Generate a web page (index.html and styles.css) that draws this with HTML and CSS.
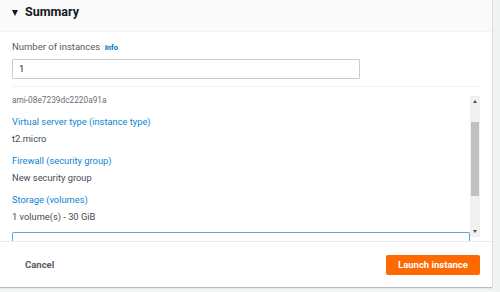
FILE: index.html
```html
<!DOCTYPE html>
<html>
<head>
<meta charset="utf-8">
<link rel="stylesheet" href="styles.css">
</head>
<body>
<div class="panel">
  <div class="header">
    <span class="caret"></span>
    <h2 class="title">Summary</h2>
  </div>
  <div class="top">
    <div class="field-label">Number of instances <a class="info">Info</a></div>
    <div class="input">1</div>
    <div class="sep"></div>
  </div>
  <div class="scroll">
    <div class="scroll-content">
      <div class="ami">ami-08e7239dc2220a91a</div>
      <div class="item">
        <div class="key">Virtual server type (instance type)</div>
        <div class="val">t2.micro</div>
      </div>
      <div class="item">
        <div class="key">Firewall (security group)</div>
        <div class="val">New security group</div>
      </div>
      <div class="item">
        <div class="key">Storage (volumes)</div>
        <div class="val">1 volume(s) - 30 GiB</div>
      </div>
      <div class="box"></div>
    </div>
    <div class="scrollbar">
      <div class="arrow up"></div>
      <div class="track"><div class="thumb"></div></div>
      <div class="arrow down"></div>
    </div>
  </div>
  <div class="footer">
    <span class="cancel">Cancel</span>
    <button class="launch">Launch instance</button>
  </div>
</div>
</body>
</html>
```
FILE: styles.css
```css
html, body {
  margin: 0;
  padding: 0;
}
body {
  width: 500px;
  height: 292px;
  background: #f2f3f3;
  font-family: Roboto, "Open Sans", sans-serif;
  color: #16191f;
  overflow: hidden;
}
.panel {
  width: 492px;
  height: 287px;
  background: #ffffff;
  box-shadow: 0 1px 1px rgba(0, 28, 36, 0.25), 1px 0 0 #e4e6e6;
  display: flex;
  flex-direction: column;
}
.header {
  height: 32px;
  background: #fafafa;
  border-bottom: 1px solid #f2f2f2;
  box-sizing: border-box;
  display: flex;
  align-items: center;
  padding: 0 0 7px 12px;
}
.caret {
  width: 0;
  height: 0;
  border-left: 3.5px solid transparent;
  border-right: 3.5px solid transparent;
  border-top: 6px solid #16191f;
  margin-right: 7px;
  margin-top: 1px;
}
.title {
  margin: 0;
  font-size: 12.5px;
  font-weight: 700;
  line-height: 16px;
  color: #16191f;
}
.top {
  padding: 8px 12px 0 12px;
}
.field-label {
  font-size: 9.5px;
  line-height: 14px;
  color: #545b64;
}
.info {
  font-size: 7.5px;
  font-weight: 700;
  color: #0073bb;
  margin-left: 2px;
}
.input {
  margin-top: 4px;
  width: 348px;
  height: 20px;
  box-sizing: border-box;
  border: 1px solid #c7cdcd;
  border-radius: 1px;
  font-size: 9.5px;
  line-height: 18px;
  padding-left: 6px;
  color: #16191f;
}
.sep {
  margin-top: 7px;
  height: 1px;
  background: #f2f3f3;
}
.scroll {
  height: 154px;
  display: flex;
  padding: 0 12px;
  overflow: hidden;
}
.scroll-content {
  flex: 1;
  padding-top: 7px;
}
.ami {
  font-size: 8.3px;
  line-height: 12px;
  color: #687078;
}
.item {
  margin-top: 9px;
}
.item + .item {
  margin-top: 8px;
}
.key {
  font-size: 9.3px;
  line-height: 14px;
  color: #0a86d1;
}
.val {
  margin-top: 3px;
  font-size: 9.3px;
  line-height: 14px;
  color: #454c54;
}
.box {
  margin-top: 8px;
  height: 14px;
  border: 1px solid #5aa7e0;
  border-bottom: none;
  border-radius: 2px 2px 0 0;
}
.scrollbar {
  width: 10px;
  margin-top: 9px;
  height: 141px;
  background: #f0f0f0;
  display: flex;
  flex-direction: column;
}
.arrow {
  height: 12px;
  position: relative;
}
.arrow::after {
  content: "";
  position: absolute;
  left: 3px;
  width: 0;
  height: 0;
  border-left: 2px solid transparent;
  border-right: 2px solid transparent;
}
.arrow.up::after {
  top: 4px;
  border-bottom: 3px solid #505050;
}
.arrow.down::after {
  top: 5px;
  border-top: 3px solid #505050;
}
.track {
  flex: 1;
  padding: 14px 1px 0 1px;
}
.thumb {
  height: 74px;
  background: #c1c1c1;
}
.footer {
  flex: 1;
  border-top: 1px solid #eaeded;
  display: flex;
  align-items: center;
  justify-content: space-between;
  padding: 0 12px 0 25px;
}
.cancel {
  font-size: 9.5px;
  font-weight: 700;
  color: #545b64;
}
.launch {
  width: 94px;
  height: 20px;
  background: #ff6a00;
  border: none;
  border-radius: 2px;
  color: #ffffff;
  font-family: Roboto, "Open Sans", sans-serif;
  font-size: 9.5px;
  font-weight: 700;
  padding: 0;
}
```
